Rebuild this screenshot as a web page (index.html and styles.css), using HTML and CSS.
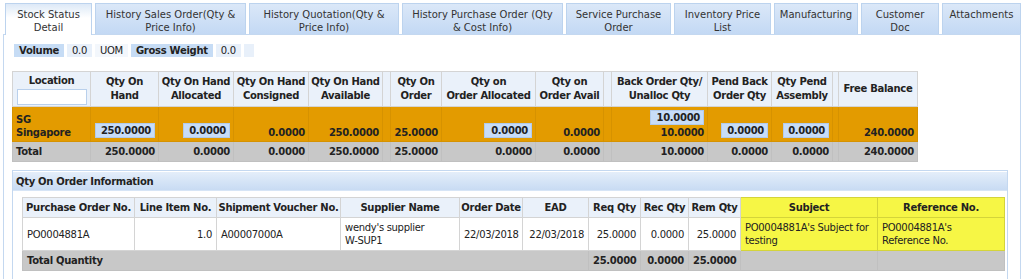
FILE: index.html
```html
<!DOCTYPE html>
<html lang="en">
<head>
  <meta charset="UTF-8">
  <title>Stock Status Detail</title>
  <link rel="stylesheet" href="styles.css">
</head>
<body>
  <div class="tabs">
    <div class="tab active" style="width:87px">Stock Status<br>Detail</div>
    <div class="tab" style="width:151px">History Sales Order(Qty &amp;<br>Price Info)</div>
    <div class="tab" style="width:150px">History Quotation(Qty &amp;<br>Price Info)</div>
    <div class="tab" style="width:161px">History Purchase Order (Qty<br>&amp; Cost Info)</div>
    <div class="tab" style="width:105px">Service Purchase<br>Order</div>
    <div class="tab" style="width:97px">Inventory Price<br>List</div>
    <div class="tab" style="width:84px">Manufacturing</div>
    <div class="tab" style="width:78px">Customer<br>Doc</div>
    <div class="tab" style="width:79px">Attachments</div>
  </div>

  <div class="panel">
    <table class="measure">
      <tr>
        <td class="label">Volume</td>
        <td class="value">0.0</td>
        <td class="unit">UOM</td>
        <td class="label">Gross Weight</td>
        <td class="value">0.0</td>
        <td class="value blank"></td>
      </tr>
    </table>

    <table class="grid stock">
      <colgroup>
        <col style="width:78px"><col style="width:68px"><col style="width:75px"><col style="width:75px"><col style="width:74px">
        <col style="width:8px"><col style="width:51px"><col style="width:94px"><col style="width:68px"><col style="width:8px">
        <col style="width:96px"><col style="width:64px"><col style="width:61px"><col style="width:6px"><col style="width:79px">
      </colgroup>
      <tr class="head">
        <th>Location<input class="filter" type="text"></th>
        <th>Qty On<br>Hand</th>
        <th>Qty On Hand<br>Allocated</th>
        <th>Qty On Hand<br>Consigned</th>
        <th>Qty On Hand<br>Available</th>
        <th></th>
        <th>Qty On<br>Order</th>
        <th>Qty on<br>Order Allocated</th>
        <th>Qty on<br>Order Avail</th>
        <th></th>
        <th>Back Order Qty/<br>Unalloc Qty</th>
        <th>Pend Back<br>Order Qty</th>
        <th>Qty Pend<br>Assembly</th>
        <th></th>
        <th>Free Balance</th>
      </tr>
      <tr class="site">
        <td class="loc">SG<br>Singapore</td>
        <td><span class="box" style="width:60px">250.0000</span></td>
        <td><span class="box" style="width:47px">0.0000</span></td>
        <td>0.0000</td>
        <td>250.0000</td>
        <td></td>
        <td>25.0000</td>
        <td><span class="box" style="width:48px">0.0000</span></td>
        <td>0.0000</td>
        <td></td>
        <td><span class="box" style="width:54px">10.0000</span><br>10.0000</td>
        <td><span class="box" style="width:47px">0.0000</span></td>
        <td><span class="box" style="width:46px">0.0000</span></td>
        <td></td>
        <td>240.0000</td>
      </tr>
      <tr class="total">
        <td class="loc">Total</td>
        <td>250.0000</td>
        <td>0.0000</td>
        <td>0.0000</td>
        <td>250.0000</td>
        <td></td>
        <td>25.0000</td>
        <td>0.0000</td>
        <td>0.0000</td>
        <td></td>
        <td>10.0000</td>
        <td>0.0000</td>
        <td>0.0000</td>
        <td></td>
        <td>240.0000</td>
      </tr>
    </table>

    <div class="section">
      <div class="section-title">Qty On Order Information</div>
      <table class="grid orders">
        <colgroup>
          <col style="width:112px"><col style="width:82px"><col style="width:124px"><col style="width:119px"><col style="width:63px">
          <col style="width:66px"><col style="width:52px"><col style="width:48px"><col style="width:52px"><col style="width:137px"><col style="width:127px">
        </colgroup>
        <tr class="head">
          <th>Purchase Order No.</th>
          <th>Line Item No.</th>
          <th>Shipment Voucher No.</th>
          <th>Supplier Name</th>
          <th>Order Date</th>
          <th>EAD</th>
          <th>Req Qty</th>
          <th>Rec Qty</th>
          <th>Rem Qty</th>
          <th class="mark">Subject</th>
          <th class="mark">Reference No.</th>
        </tr>
        <tr class="line">
          <td>PO0004881A</td>
          <td class="num">1.0</td>
          <td>A00007000A</td>
          <td>wendy's supplier<br>W-SUP1</td>
          <td>22/03/2018</td>
          <td class="num">22/03/2018</td>
          <td class="num">25.0000</td>
          <td class="num">0.0000</td>
          <td class="num">25.0000</td>
          <td class="mark">PO0004881A's Subject for<br>testing</td>
          <td class="mark">PO0004881A's<br>Reference No.</td>
        </tr>
        <tr class="total">
          <td colspan="6">Total Quantity</td>
          <td class="num">25.0000</td>
          <td class="num">0.0000</td>
          <td class="num">25.0000</td>
          <td></td>
          <td></td>
        </tr>
      </table>
    </div>
  </div>
</body>
</html>
```

FILE: styles.css
```css
body {
  margin: 0;
  font-family: "DejaVu Sans", Verdana, sans-serif;
  font-size: 10px;
  letter-spacing: -0.3px;
  color: #222;
  background: #fff;
}

.tabs {
  display: flex;
  gap: 3px;
  padding: 3px 0 0 5px;
  height: 31px;
}

.tab {
  box-sizing: border-box;
  height: 31px;
  padding-top: 4px;
  text-align: center;
  line-height: 13px;
  color: #333;
  letter-spacing: 0;
  background: linear-gradient(#dbe8f8, #c3d9f4);
  border: 1px solid #bcd3ee;
  border-bottom: none;
}

.tab.active {
  background: linear-gradient(#dde9f7, #ffffff 45%);
  height: 32px;
  margin-bottom: -1px;
  position: relative;
}

.panel {
  margin: 0 3px;
  border: 1px solid #c4d8f0;
  border-bottom: none;
  padding: 9px 0 0 8px;
  height: 236px;
}

.measure {
  border-spacing: 3px 0;
  margin-left: -1px;
}

.measure td {
  padding: 1px 5px;
  height: 11px;
  line-height: 11px;
}

.measure .label {
  background: #c6dcf5;
  font-weight: bold;
}

.measure .value {
  background: #e8f0fa;
}

.measure .unit {
  background: #f3f7fc;
}

.measure .blank {
  width: 0;
}

.grid {
  border-collapse: collapse;
  table-layout: fixed;
}

.grid th,
.grid td {
  padding: 0 4px;
  border: 1px solid #d4d4d4;
  overflow: hidden;
  white-space: nowrap;
}

.grid th {
  background: #eaf1fa;
  font-weight: bold;
  line-height: 14px;
  text-align: center;
}

.stock {
  width: 905px;
  margin-top: 14px;
  font-weight: bold;
}

.stock .head th {
  height: 34px;
  padding: 0 1px;
}

.filter {
  display: block;
  box-sizing: border-box;
  width: 70px;
  height: 16px;
  margin: 1px auto 0;
  border: 1px solid #b9d0ec;
  background: #fff;
}

.stock td {
  text-align: right;
  line-height: 13px;
  padding: 0 3px;
}

.stock .site td {
  background: #e39b00;
  height: 32px;
  vertical-align: bottom;
  padding-bottom: 2px;
  border-color: #d69200;
}

.stock td.loc {
  text-align: left;
}

.stock .total td {
  background: #c8c8c8;
  height: 19px;
  border-color: #c0c0c0;
}

.box {
  display: inline-block;
  box-sizing: border-box;
  height: 15px;
  line-height: 13px;
  padding-right: 3px;
  text-align: right;
  background: #c7dcf8;
  border: 1px solid #b2cbec;
  margin-bottom: 1px;
}

.section {
  margin: 8px 12px 0 0;
  border: 1px solid #c4d8f0;
  border-bottom: none;
  height: 110px;
  padding-top: 1px;
}

.section-title {
  height: 18px;
  line-height: 19px;
  padding-left: 3px;
  font-weight: bold;
  background: linear-gradient(#e4eefa, #c8dbf3);
  border-bottom: 1px solid #d7e5f6;
}

.orders {
  width: 982px;
  margin: 6px 0 0 9px;
}

.orders .head th {
  height: 19px;
  padding: 0 1px;
}

.orders td {
  line-height: 13px;
}

.orders .line td {
  height: 32px;
  background: #fff;
}

.orders td.num {
  text-align: right;
}

.orders .total td {
  background: #c8c8c8;
  font-weight: bold;
  height: 19px;
  border-color: #c0c0c0;
}

.orders .mark {
  background: #f6f645;
  border-color: #d4d43a;
  text-align: left;
}

.orders th.mark {
  background: #f6f645;
  text-align: center;
}

.orders .line td.mark {
  background: #f6f645;
}
```
